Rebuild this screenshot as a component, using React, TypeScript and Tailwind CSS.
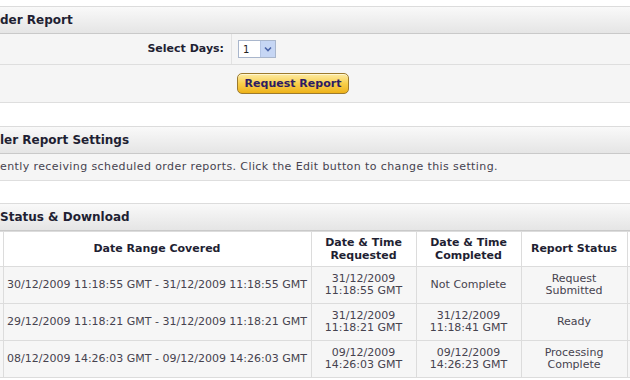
import React from 'react'

const font = { fontFamily: '"DejaVu Sans", Verdana, sans-serif' }

function SectionHeader({ title }: { title: string }) {
  return (
    <div className="h-[28px] border-t border-t-[#dcdcdc] border-b border-b-[#c9c9c9] bg-gradient-to-b from-[#f9f9f9] to-[#e5e5e5] flex items-center overflow-hidden">
      <span className="text-[12px] font-bold text-[#1f1f33] whitespace-nowrap">{title}</span>
    </div>
  )
}

const rows = [
  {
    range: '30/12/2009 11:18:55 GMT - 31/12/2009 11:18:55 GMT',
    requested: ['31/12/2009', '11:18:55 GMT'],
    completed: ['Not Complete'],
    status: ['Request', 'Submitted'],
  },
  {
    range: '29/12/2009 11:18:21 GMT - 31/12/2009 11:18:21 GMT',
    requested: ['31/12/2009', '11:18:21 GMT'],
    completed: ['31/12/2009', '11:18:41 GMT'],
    status: ['Ready'],
  },
  {
    range: '08/12/2009 14:26:03 GMT - 09/12/2009 14:26:03 GMT',
    requested: ['09/12/2009', '14:26:03 GMT'],
    completed: ['09/12/2009', '14:26:23 GMT'],
    status: ['Processing', 'Complete'],
  },
]

function Lines({ lines }: { lines: string[] }) {
  return (
    <>
      {lines.map((l) => (
        <div key={l}>{l}</div>
      ))}
    </>
  )
}

export default function App() {
  return (
    <div style={font} className="w-[630px] h-[380px] bg-white overflow-hidden text-[#46434f]">
      <div className="h-[6px]" />

      {/* order report */}
      <SectionHeader title="der Report" />
      <div className="bg-[#f5f5f5]">
        <div className="flex h-[31px] border-b border-[#dedede]">
          <div className="w-[232px] flex items-center justify-end pr-[7px] border-r border-[#e2e2e2] text-[11px] font-bold text-[#1f1f33]">
            Select Days:
          </div>
          <div className="flex items-center pl-[6px]">
            <div className="w-[38px] h-[18px] border border-[#a9b6cc] bg-white flex items-center">
              <span className="text-[10px] text-[#222] pl-[4px] flex-1">1</span>
              <span className="w-[15px] h-full bg-[#c6d6f4] border-l border-[#b3c4e4] flex items-center justify-center">
                <svg width="8" height="6" viewBox="0 0 8 6">
                  <path d="M1 1.5 L4 4.5 L7 1.5" fill="none" stroke="#4a64a8" strokeWidth="1.6" />
                </svg>
              </span>
            </div>
          </div>
        </div>
        <div className="flex h-[38px] border-b border-[#dedede]">
          <div className="w-[237px]" />
          <div className="flex items-center">
            <button className="w-[112px] h-[21px] rounded-[5px] border border-[#9c7a2e] bg-gradient-to-b from-[#fdeaa0] via-[#f8cf4a] to-[#eeb215] text-[11px] font-bold text-[#2d1c63] leading-none shadow-[inset_0_1px_0_#fff6cf]">
              Request Report
            </button>
          </div>
        </div>
      </div>

      <div className="h-[23px]" />

      {/* settings */}
      <SectionHeader title="ler Report Settings" />
      <div className="h-[27px] bg-[#f5f5f5] border-b border-[#dedede] flex items-center text-[11px] tracking-[0.4px] whitespace-nowrap overflow-hidden">
        <span>ently receiving scheduled order reports. Click the Edit button to change this setting.</span>
      </div>

      <div className="h-[22px]" />

      {/* status & download */}
      <SectionHeader title="Status & Download" />
      <table className="border-collapse table-fixed w-[660px] text-[11px]">
        <colgroup>
          <col className="w-[3px]" />
          <col className="w-[308px]" />
          <col className="w-[105px]" />
          <col className="w-[105px]" />
          <col className="w-[106px]" />
          <col className="w-[33px]" />
        </colgroup>
        <thead>
          <tr className="h-[35px] bg-white text-[#1f1f33] font-bold">
            <th className="border border-[#dcdcdc] border-l-0" />
            <th className="border border-[#dcdcdc] font-bold">Date Range Covered</th>
            <th className="border border-[#dcdcdc] font-bold leading-[13px]">
              Date &amp; Time
              <br />
              Requested
            </th>
            <th className="border border-[#dcdcdc] font-bold leading-[13px]">
              Date &amp; Time
              <br />
              Completed
            </th>
            <th className="border border-[#dcdcdc] font-bold">Report Status</th>
            <th className="border border-[#dcdcdc]" />
          </tr>
        </thead>
        <tbody>
          {rows.map((r) => (
            <tr key={r.range} className="h-[37px] bg-[#f6f6f6] text-center leading-[12px]">
              <td className="border border-[#dcdcdc] border-l-0" />
              <td className="border border-[#dcdcdc] whitespace-nowrap">{r.range}</td>
              <td className="border border-[#dcdcdc]">
                <Lines lines={r.requested} />
              </td>
              <td className="border border-[#dcdcdc]">
                <Lines lines={r.completed} />
              </td>
              <td className="border border-[#dcdcdc]">
                <Lines lines={r.status} />
              </td>
              <td className="border border-[#dcdcdc]" />
            </tr>
          ))}
        </tbody>
      </table>
    </div>
  )
}
